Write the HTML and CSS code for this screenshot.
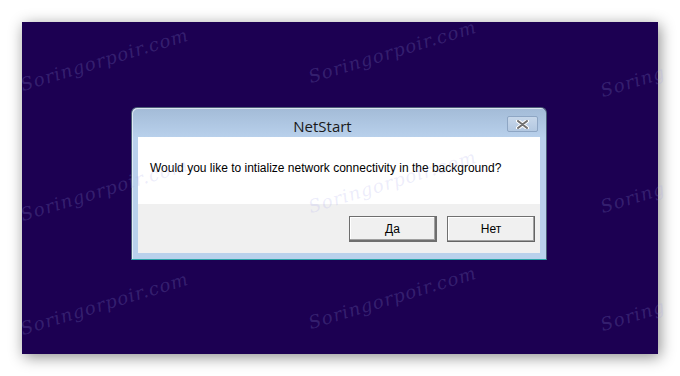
FILE: index.html
```html
<!DOCTYPE html>
<html lang="ru">
<head>
  <meta charset="UTF-8">
  <title>NetStart</title>
  <link rel="stylesheet" href="styles.css">
</head>
<body>
  <div class="desktop">
    <div class="dialog">
      <div class="titlebar">
        <span class="title">NetStart</span>
        <span class="close">
          <svg width="13" height="9" viewBox="0 0 13 9">
            <path d="M2 1 L11 8 M11 1 L2 8" stroke="#fff" stroke-width="4" stroke-linecap="round"/>
            <path d="M2 1 L11 8 M11 1 L2 8" stroke="#707070" stroke-width="2" stroke-linecap="round"/>
          </svg>
        </span>
      </div>
      <div class="message">Would you like to intialize network connectivity in the background?</div>
      <div class="actions">
        <button class="btn btn-default">Да</button>
        <button class="btn">Нет</button>
      </div>
    </div>
  </div>

  <!-- watermark layer -->
  <div class="marks">
    <span class="mark m1">Soringorpoir.com</span>
    <span class="mark m2">Soringorpoir.com</span>
    <span class="mark m3">Soring</span>
    <span class="mark m4">Soringorpoir.com</span>
    <span class="mark m5">Soringorpoir.com</span>
    <span class="mark m6">Soring</span>
    <span class="mark m7">Soringorpoir.com</span>
    <span class="mark m8">Soringorpoir.com</span>
    <span class="mark m9">Soring</span>
  </div>
</body>
</html>
```

FILE: styles.css
```css
body {
  margin: 0;
  background: #fff;
  font-family: "Liberation Sans", Arial, sans-serif;
  width: 680px;
  height: 376px;
  overflow: hidden;
  position: relative;
}

.desktop {
  margin: 22px 0 0 22px;
  width: 636px;
  height: 332px;
  background: #1c0052;
  box-shadow: 2px 3px 14px rgba(0, 0, 0, 0.45);
  padding: 85px 0 0 109px;
  box-sizing: border-box;
}

.dialog {
  width: 416px;
  height: 153px;
  box-sizing: border-box;
  border: 1px solid #4a5c78;
  border-radius: 6px 6px 0 0;
  border-bottom-color: #2aa4a8;
  background: linear-gradient(#a3bbd7, #b9d1ec 30px, #b9d1ec);
  padding: 0 6px 6px 6px;
  display: flex;
  flex-direction: column;
  box-shadow: inset 1px 1px 0 rgba(255, 255, 255, 0.6);
}

.titlebar {
  height: 29px;
  display: flex;
  align-items: flex-start;
}

.title {
  flex: 1;
  text-align: center;
  font-family: "Open Sans", "Noto Sans", sans-serif;
  font-size: 15px;
  color: #1a1a1a;
  line-height: 18px;
  padding-top: 9px;
}

.close {
  width: 31px;
  height: 16px;
  margin: 8px 2px 0 0;
  box-sizing: border-box;
  border: 1px solid #8ea6c4;
  border-radius: 2px;
  background: linear-gradient(#c7d7ea, #b3c8e1);
  display: flex;
  align-items: center;
  justify-content: center;
}

.message {
  background: #fff;
  height: 67px;
  padding: 24px 0 0 12px;
  box-sizing: border-box;
  font-size: 12px;
  color: #000;
}

.actions {
  flex: 1;
  background: #f0f0f0;
  display: flex;
  justify-content: flex-end;
  align-items: flex-start;
  gap: 10px;
  padding: 12px 5px 0 0;
}

.btn {
  width: 88px;
  height: 26px;
  box-sizing: border-box;
  font-family: "Liberation Sans", Arial, sans-serif;
  font-size: 12px;
  color: #000;
  background: #f0f0f0;
  border: 1px solid #707070;
  border-right-color: #646464;
  border-bottom-color: #646464;
  box-shadow: inset -1px -1px 0 #a0a0a0, inset 1px 1px 0 #fff;
  padding: 0;
}

.btn-default {
  border: 2px solid #6e6e6e;
  border-top-width: 1px;
  border-left-width: 1px;
}

.marks {
  position: absolute;
  left: 0;
  top: 0;
  width: 680px;
  height: 376px;
  pointer-events: none;
}

.mark {
  position: absolute;
  font-family: "DejaVu Serif", serif;
  font-style: italic;
  font-size: 18px;
  letter-spacing: 1px;
  color: rgba(160, 160, 235, 0.2);
  transform: rotate(-17deg);
  transform-origin: left bottom;
  white-space: nowrap;
}

.m1 { left: 24px; top: 74px; }
.m2 { left: 312px; top: 66px; }
.m3 { left: 604px; top: 80px; }
.m4 { left: 24px; top: 204px; }
.m5 { left: 312px; top: 196px; }
.m6 { left: 604px; top: 196px; }
.m7 { left: 24px; top: 318px; }
.m8 { left: 312px; top: 312px; }
.m9 { left: 604px; top: 314px; }
```
